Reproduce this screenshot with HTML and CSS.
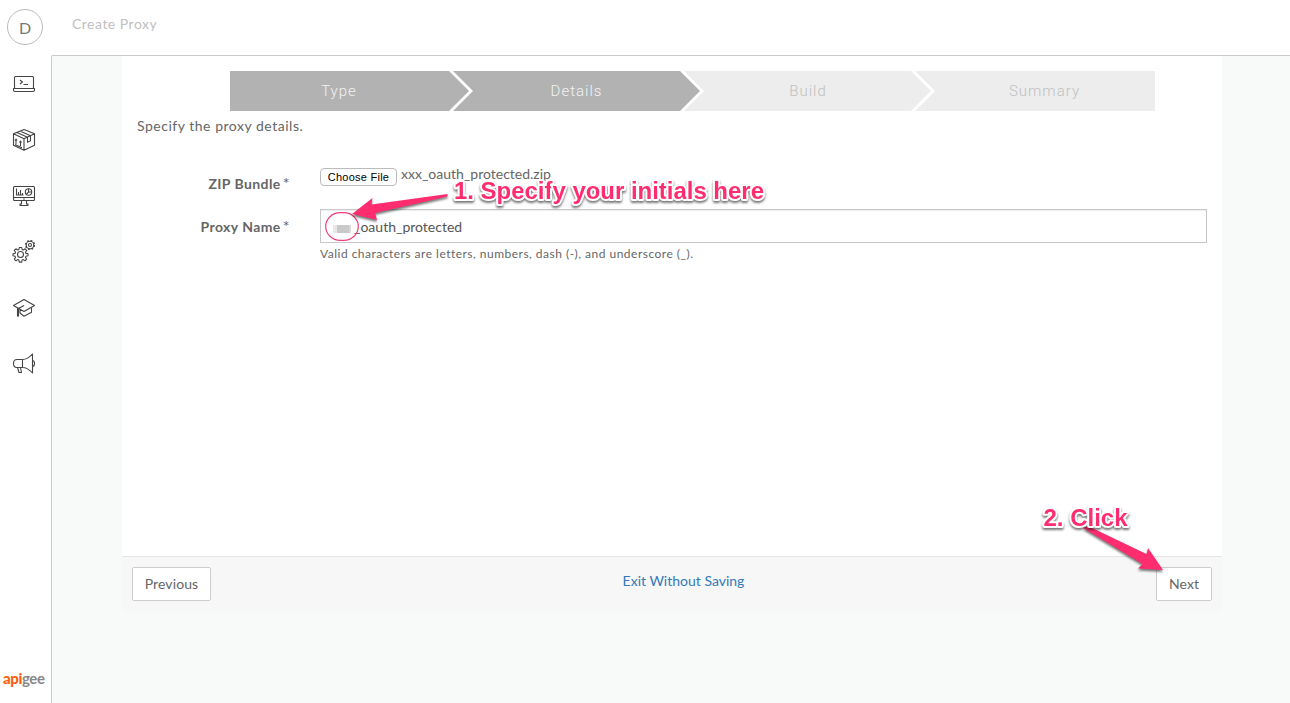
FILE: index.html
```html
<!DOCTYPE html>
<html lang="en">
<head>
<meta charset="utf-8">
<title>Create Proxy</title>
<link rel="stylesheet" href="styles.css">
</head>
<body>
<div class="app">
  <nav class="sidebar">
    <div class="avatar">D</div>
    <div class="nav-list">
      <svg class="nav-icon" viewBox="0 0 24 24"><rect x="2.5" y="4.5" width="19" height="12" rx="1"/><path d="M1.5 16.5h21v1.5q0 1.5-1.5 1.5h-18q-1.500 0-1.500-1.500z"/><path d="M8 8l2.500 2-2.500 2M11.500 12.500h4.500"/></svg>
      <svg class="nav-icon" viewBox="0 0 24 24"><path d="M12 1.500l10.500 4.300v11.500l-10.500 5-10.500-5v-11.500zM1.500 5.800l10.500 5 10.500-5M12 10.800v11.500M5 4.500l10.500 4.800v5l3-1.500v-5l-10.500-4.800M4 16v-4.500M3 12.500l1-1.500 1 1.500M8.500 18v-4.500M7.500 14.500l1-1.500 1 1.500M3 16.500l7 3.200"/></svg>
      <svg class="nav-icon" viewBox="0 0 24 24"><rect x="1.500" y="2.500" width="21" height="14" rx="1"/><path d="M1.500 13.500h21M4.500 4.500v6.500h7M6.500 11v-3M8.500 11v-5M10.500 11v-2M11.200 15h1.600M9.500 16.500v3.500h-1.500v1.500h8v-1.500h-1.500v-3.500"/><circle cx="16.500" cy="8" r="3.200"/><path d="M16.500 5v3h3M16.500 8l-2 2"/></svg>
      <svg class="nav-icon" viewBox="0 1 24 24"><circle cx="8.500" cy="15.500" r="3"/><path d="M7.300 8.500h2.400l.4 2 1.200.5 1.800-1.200 1.600 1.600-1.200 1.900.5 1.100 2 .4v2l-2 .4-.5 1.200 1.200 1.800-1.600 1.600-1.800-1.200-1.200.5-.4 2h-2.400l-.4-2-1.200-.5-1.800 1.200-1.600-1.600 1.200-1.800-.5-1.200-2-.4v-2l2-.4.5-1.100-1.200-1.900 1.600-1.600 1.800 1.200 1.200-.5z"/><circle cx="18" cy="6" r="3.800"/><circle cx="18" cy="6" r="1.500"/><circle class="teeth" cx="18" cy="6" r="4.500"/></svg>
      <svg class="nav-icon" viewBox="0 0 24 24"><path d="M1.500 9.500l10.500-6 10.500 6-10.500 6zM12 9.500l-5.500 3v8M5.500 20.500v-8.500M8 13.500v3.500l4 3.200 7.500-4v-5"/></svg>
      <svg class="nav-icon" viewBox="0 1 24 24"><path d="M10.500 8.500h-5.500q-3.500 0-3.500 4t3.500 4h5.500zM10.500 8.500q5 0 10-5.500v19q-5-5.500-10-5.500M20.500 9.500q2 0 2 3t-2 3M5.500 16.500l1.500 5h2.500l-1-5"/></svg>
    </div>
    <div class="brand"><span class="brand-api">api</span>gee</div>
  </nav>
  <div class="content">
    <header class="topbar">Create Proxy</header>
    <main class="stage">
      <section class="panel">
        <div class="steps">
          <div class="step step-type">Type</div>
          <div class="step step-details">Details</div>
          <div class="step step-build">Build</div>
          <div class="step step-summary">Summary</div>
        </div>
        <p class="intro">Specify the proxy details.</p>
        <div class="row row-zip">
          <label class="label">ZIP Bundle<span class="star">*</span></label>
          <button class="choose">Choose File</button>
          <span class="filename">xxx_oauth_protected.zip</span>
        </div>
        <div class="row row-name">
          <label class="label">Proxy Name<span class="star">*</span></label>
          <div class="input"><span class="redacted"></span>_oauth_protected</div>
        </div>
        <p class="help">Valid characters are letters, numbers, dash (-), and underscore (_).</p>
      </section>
      <footer class="footer">
        <button class="btn">Previous</button>
        <a class="exit">Exit Without Saving</a>
        <button class="btn btn-next">Next</button>
      </footer>
    </main>
  </div>
</div>
<svg class="notes" viewBox="0 0 1290 703">
  <rect class="ring" x="325.700" y="212.700" width="32.600" height="27.600" rx="14.500" ry="13.800"/>
  <g class="shadowed">
    <path class="arrow" d="M352 214L372.500 198L371.500 204.500L447.500 194V196.500L375 213L377 220Z"/>
    <path class="arrow" d="M1083 528L1088 526L1146.500 554L1148 548L1163 570L1138 568.500L1142.500 564Z"/>
  </g>
  <g class="shadowed">
    <text class="note" x="454" y="199" textLength="310">1. Specify your initials here</text>
    <text class="note" x="1043.500" y="526" textLength="84">2. Click</text>
  </g>
</svg>
</body>
</html>
```
FILE: styles.css
```css
* { box-sizing: border-box; }
body { margin: 0; background: #fff; color: #666; font: 14px/20px Lato, "Liberation Sans", sans-serif; }
p { margin: 0; }
button { font: inherit; color: inherit; }
.app { display: flex; height: 703px; }
.sidebar { width: 51px; display: flex; flex-direction: column; align-items: flex-start; padding: 9px 0 15px 7px; }
.avatar { width: 36px; height: 36px; border: 1px solid #bbb; border-radius: 50%; text-align: center; font-size: 16px; line-height: 36px; color: #777; }
.nav-list { display: flex; flex-direction: column; gap: 32px; margin: 27px 0 0 5px; }
.nav-icon { width: 24px; height: 24px; fill: none; stroke: #444; stroke-width: 1.1; stroke-linejoin: round; display: block; }
.teeth { stroke-width: 1.300; stroke-dasharray: 1.770; }
.brand { margin: auto 0 0 -4px; font: 700 15px/20px Lato, sans-serif; letter-spacing: -0.4px; color: #888; }
.brand-api { color: #ff6010; font-weight: 900; }
.content { flex: 1; display: flex; flex-direction: column; }
.topbar { height: 55px; padding: 14px 0 0 21px; color: #c0c0c0; letter-spacing: 0.5px; }
.stage { flex: 1; border: solid #c8cacb; border-width: 1px 0 0 1px; border-radius: 2px 0 0 0; background: #f7faf9; padding-left: 70px; }
.panel { width: 1100px; height: 500px; background: #fff; padding-top: 15px; }
.steps { display: flex; margin-left: 108px; height: 40px; }
.step { height: 40px; background: #b2b2b2; color: #f2f2f2; text-align: center; font: 300 15px/40px Roboto, sans-serif; letter-spacing: 1px; }
.step-type { width: 240px; padding-right: 22px; clip-path: polygon(0 0, 219px 0, 239px 20px, 219px 40px, 0 40px); }
.step-details { width: 247px; margin-left: -17px; clip-path: polygon(0 0, 227px 0, 247px 20px, 227px 40px, 0 40px, 20px 20px); }
.step-build { width: 248px; margin-left: -16px; background: #ededed; color: #c0c0c0; clip-path: polygon(0 0, 227px 0, 247px 20px, 227px 40px, 0 40px, 20px 20px); }
.step-summary { width: 240px; margin-left: -17px; padding-left: 19px; background: #ededed; color: #c0c0c0; clip-path: polygon(0 0, 100% 0, 100% 100%, 0 100%, 20px 20px); }
.intro { margin: 5px 0 0 15px; letter-spacing: 0.52px; }
.row { display: flex; align-items: flex-start; }
.row-zip { height: 46px; margin-top: 27px; }
.row-name { height: 34px; }
.label { width: 168px; margin-right: 30px; font-weight: 700; line-height: 20px; padding-top: 11px; text-align: right; letter-spacing: 0.43px; }
.row-name .label { padding-top: 8px; }
.star { font-size: 16px; line-height: 16px; font-weight: 400; margin-left: 2px; }
.choose { width: 77px; height: 18px; margin: 5px 4px 0 0; padding: 0; border: 1px solid #bbb; border-radius: 4px; background: #fff; color: #000; font: 11px/15px "Liberation Sans", sans-serif; letter-spacing: 0.25px; }
.filename { line-height: 21px; }
.input { width: 887px; height: 34px; border: 1px solid #c8c8c8; box-shadow: inset 0 1px 1px #eee; padding-left: 12px; line-height: 34px; color: #555; display: flex; }
.redacted { width: 18px; height: 8px; margin: 15px 3px 0 0; background: linear-gradient(90deg, #e8e8e8 4px, #c9c9c9 4px 16px, #d8d8d8 16px); }
.help { margin: 1px 0 0 198px; font-size: 12px; letter-spacing: 0.49px; }
.footer { width: 1100px; height: 55px; border-top: 1px solid #e5e5e5; background: #f7f7f7; padding: 10px; display: flex; justify-content: space-between; align-items: flex-start; }
.btn { height: 34px; width: 79px; padding: 0; border: 1px solid #ccc; border-radius: 2px; background: #fff; color: #666; letter-spacing: 0.1px; }
.btn-next { width: 56px; }
.exit { margin: 4px 0 0; color: #337ab7; }
.notes { position: absolute; left: 0; top: 0; width: 1290px; height: 703px; pointer-events: none; }
.ring { fill: none; stroke: #ee3f7b; stroke-width: 1.200; }
.arrow { fill: #ff2d6f; }
.shadowed { filter: drop-shadow(0 2px 1px #0008); }
.note { font: 700 24px "Liberation Sans", sans-serif; fill: #ff2d6f; stroke: #fff; stroke-width: 4px; stroke-linejoin: round; paint-order: stroke; }
```
